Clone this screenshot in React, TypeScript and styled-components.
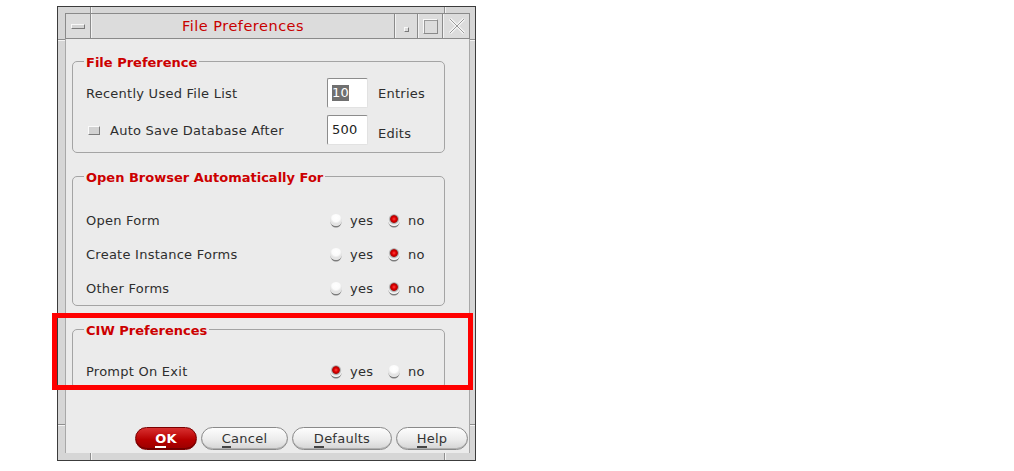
import React from 'react';
import styled, { createGlobalStyle } from 'styled-components';

const GlobalStyle = createGlobalStyle`
  html, body {
    margin: 0;
    padding: 0;
    background: #fff;
  }
  body {
    font-family: "DejaVu Sans", "Liberation Sans", sans-serif;
    font-size: 13px;
    color: #2e2e2e;
  }
`;

const Stage = styled.div`
  position: relative;
  width: 1014px;
  height: 471px;
  padding: 6px 0 0 57px;
  box-sizing: border-box;
`;

const Window = styled.div`
  position: relative;
  width: 419px;
  height: 455px;
  box-sizing: border-box;
  border: 1px solid #3c3c3c;
  background: #d6d6d6;
  padding: 6px 5px 7px 7px;
  display: flex;
  flex-direction: column;
`;

const Notch = styled.span<{ $side: 'top' | 'bottom'; $x: number }>`
  position: absolute;
  ${(p) => (p.$side === 'top' ? 'top: 0; height: 6px;' : 'bottom: 0; height: 7px;')}
  left: ${(p) => p.$x}px;
  width: 1px;
  background: #8e8e8e;
  box-shadow: 1px 0 0 #f4f4f4;
`;

const SideNotch = styled.span<{ $side: 'left' | 'right'; $y: number }>`
  position: absolute;
  ${(p) => (p.$side === 'left' ? 'left: 0; width: 7px;' : 'right: 0; width: 5px;')}
  top: ${(p) => p.$y}px;
  height: 1px;
  background: #8e8e8e;
  box-shadow: 0 1px 0 #f4f4f4;
`;

const TitleBar = styled.div`
  display: flex;
  height: 26px;
  box-sizing: border-box;
  border: 1px solid #8a8a8a;
  background: #dcdcdc;
`;

const TitleButton = styled.div<{ $w: number }>`
  width: ${(p) => p.$w}px;
  display: flex;
  align-items: center;
  justify-content: center;
  box-sizing: border-box;
  border-left: 1px solid #f2f2f2;
  border-right: 1px solid #8a8a8a;
  &:first-child {
    border-left: none;
  }
  &:last-child {
    border-right: none;
  }
`;

const MenuBar = styled.span`
  width: 14px;
  height: 5px;
  box-sizing: border-box;
  border: 1px solid;
  border-color: #f8f8f8 #7a7a7a #7a7a7a #f8f8f8;
  background: #d4d4d4;
`;

const MinBox = styled.span`
  width: 5px;
  height: 5px;
  margin-top: 6px;
  box-sizing: border-box;
  border: 1px solid;
  border-color: #f8f8f8 #7a7a7a #7a7a7a #f8f8f8;
`;

const MaxBox = styled.span`
  width: 15px;
  height: 15px;
  box-sizing: border-box;
  border: 1px solid;
  border-color: #f8f8f8 #8a8a8a #8a8a8a #f8f8f8;
  box-shadow: inset 1px 1px 0 #9a9a9a;
`;

const TitleText = styled.div`
  flex: 1;
  text-align: center;
  line-height: 24px;
  font-size: 14.5px;
  letter-spacing: 0.5px;
  color: #c80000;
  border-left: 1px solid #f2f2f2;
  border-right: 1px solid #8a8a8a;
`;

const Panel = styled.div`
  flex: 1;
  display: flex;
  flex-direction: column;
  background: #ebebeb;
  border-left: 1px solid #a8a8a8;
  border-right: 1px solid #a8a8a8;
  padding: 12px 24px 3px 6px;
  letter-spacing: 0.25px;
`;

const Group = styled.fieldset<{ $first?: boolean }>`
  margin: ${(p) => (p.$first ? '0' : '13px')} 0 0 0;
  padding: 0 12px 0 13px;
  border: 1px solid #a4a4a4;
  border-radius: 5px;
  min-width: 0;
`;

const Legend = styled.legend`
  margin-left: -2px;
  padding: 4px 2px 0;
  line-height: 16px;
  font-weight: bold;
  letter-spacing: 0;
  color: #cc0000;
`;

const Rows = styled.div<{ $top: number; $bottom: number }>`
  padding: ${(p) => p.$top}px 0 ${(p) => p.$bottom}px;
  display: flex;
  flex-direction: column;
`;

const FieldRow = styled.div`
  display: grid;
  grid-template-columns: 231px 41px auto;
  column-gap: 10px;
  align-items: center;
  height: 30px;
  & + & {
    margin-top: 7px;
  }
`;

const ChoiceRow = styled.div`
  display: grid;
  grid-template-columns: 244px auto;
  align-items: center;
  height: 34px;
`;

const Label = styled.span`
  white-space: nowrap;
`;

const CheckLabel = styled.span`
  display: flex;
  align-items: center;
  gap: 10px;
  white-space: nowrap;
  padding-left: 2px;
`;

const CheckBox = styled.span`
  width: 12px;
  height: 9px;
  box-sizing: border-box;
  background: #d2d2d2;
  border: 1px solid;
  border-color: #fafafa #7c7c7c #7c7c7c #fafafa;
`;

const NumberBox = styled.span<{ $selected?: boolean }>`
  height: 30px;
  box-sizing: border-box;
  background: #fff;
  border: 1px solid;
  border-color: #8c8c8c #e2e2e2 #e2e2e2 #8c8c8c;
  border-radius: 2px;
  display: flex;
  align-items: center;
  padding-left: 4px;

  & > span {
    background: ${(p) => (p.$selected ? '#707070' : 'transparent')};
    color: ${(p) => (p.$selected ? '#fff' : '#222')};
    line-height: 16px;
  }
`;

const Unit = styled.span<{ $drop?: number }>`
  padding-top: ${(p) => p.$drop || 0}px;
`;

const RadioGroup = styled.div`
  display: flex;
  align-items: center;
`;

const Radio = styled.span<{ $checked?: boolean }>`
  width: 12px;
  height: 12px;
  border-radius: 50%;
  box-sizing: border-box;
  background: ${(p) =>
    p.$checked
      ? 'radial-gradient(circle at 50% 42%, #ff4040 0, #e00000 2px, #b00000 3.4px, #a8a8a8 4.2px, #e6e6e6 5.5px, #f4f4f4 6px)'
      : 'radial-gradient(circle at 50% 30%, #ffffff 0, #fbfbfb 4px, #e4e4e4 6px)'};
  box-shadow: 0 2px 0 -0.5px #7c7c7c;
  margin-right: 8px;
`;

const RadioText = styled.span<{ $w: number }>`
  width: ${(p) => p.$w}px;
`;

const ButtonRow = styled.div`
  margin-top: auto;
  display: flex;
  justify-content: flex-end;
  gap: 4px;
  margin-right: -23px;
`;

const Button = styled.button<{ $primary?: boolean; $w: number }>`
  width: ${(p) => p.$w}px;
  height: 23px;
  padding: 0;
  border-radius: 12px;
  font-family: "DejaVu Sans", "Liberation Sans", sans-serif;
  font-size: 13px;
  letter-spacing: 0.25px;
  font-weight: ${(p) => (p.$primary ? 'bold' : 'normal')};
  color: ${(p) => (p.$primary ? '#fff' : '#333')};
  border: 1px solid ${(p) => (p.$primary ? '#7a0000' : '#8a8a8a')};
  background: ${(p) =>
    p.$primary
      ? 'linear-gradient(#d83030, #b80000 55%, #9a0000)'
      : 'linear-gradient(#fdfdfd, #ececec 55%, #d4d4d4)'};
  box-shadow: inset 0 -1px 0 ${(p) => (p.$primary ? '#700000' : '#b0b0b0')};

  & u {
    text-decoration: none;
    border-bottom: 2px solid ${(p) => (p.$primary ? '#ffffff' : '#444')};
  }
`;

const Highlight = styled.div`
  position: absolute;
  left: 52px;
  top: 313px;
  width: 421px;
  height: 77px;
  box-sizing: border-box;
  border: 5px solid #ff0000;
  pointer-events: none;
`;

const choiceRows: { label: string; yes: boolean }[] = [
  { label: 'Open Form', yes: false },
  { label: 'Create Instance Forms', yes: false },
  { label: 'Other Forms', yes: false },
];

const YesNo: React.FC<{ yes: boolean }> = ({ yes }) => (
  <RadioGroup>
    <Radio $checked={yes} />
    <RadioText $w={38}>yes</RadioText>
    <Radio $checked={!yes} />
    <RadioText $w={20}>no</RadioText>
  </RadioGroup>
);

const CloseIcon = () => (
  <svg width="20" height="20" viewBox="0 0 20 20">
    <path d="M3 3 L17 17 M17 3 L3 17" stroke="#f6f6f6" strokeWidth="3" fill="none" />
    <path d="M3 3 L17 17 M17 3 L3 17" stroke="#9a9a9a" strokeWidth="1" fill="none" />
  </svg>
);

const App: React.FC = () => {
  return (
    <Stage>
      <GlobalStyle />
      <Window>
        <Notch $side="top" $x={32} />
        <Notch $side="top" $x={386} />
        <Notch $side="bottom" $x={32} />
        <Notch $side="bottom" $x={386} />
        <SideNotch $side="left" $y={32} />
        <SideNotch $side="right" $y={32} />
        <SideNotch $side="left" $y={417} />
        <SideNotch $side="right" $y={417} />

        <TitleBar>
          <TitleButton $w={25}>
            <MenuBar />
          </TitleButton>
          <TitleText>File Preferences</TitleText>
          <TitleButton $w={23}>
            <MinBox />
          </TitleButton>
          <TitleButton $w={25}>
            <MaxBox />
          </TitleButton>
          <TitleButton $w={26}>
            <CloseIcon />
          </TitleButton>
        </TitleBar>

        <Panel>
          <Group $first>
            <Legend>File Preference</Legend>
            <Rows $top={7} $bottom={7}>
              <FieldRow>
                <Label>Recently Used File List</Label>
                <NumberBox $selected>
                  <span>10</span>
                </NumberBox>
                <Unit>Entries</Unit>
              </FieldRow>
              <FieldRow>
                <CheckLabel>
                  <CheckBox />
                  Auto Save Database After
                </CheckLabel>
                <NumberBox>
                  <span>500</span>
                </NumberBox>
                <Unit $drop={6}>Edits</Unit>
              </FieldRow>
            </Rows>
          </Group>

          <Group>
            <Legend>Open Browser Automatically For</Legend>
            <Rows $top={17} $bottom={0}>
              {choiceRows.map((row) => (
                <ChoiceRow key={row.label}>
                  <Label>{row.label}</Label>
                  <YesNo yes={row.yes} />
                </ChoiceRow>
              ))}
            </Rows>
          </Group>

          <Group>
            <Legend>CIW Preferences</Legend>
            <Rows $top={15} $bottom={0}>
              <ChoiceRow>
                <Label>Prompt On Exit</Label>
                <YesNo yes={true} />
              </ChoiceRow>
            </Rows>
          </Group>

          <ButtonRow>
            <Button $primary $w={62}>
              <u>O</u>K
            </Button>
            <Button $w={87}>
              <u>C</u>ancel
            </Button>
            <Button $w={100}>
              <u>D</u>efaults
            </Button>
            <Button $w={72}>
              <u>H</u>elp
            </Button>
          </ButtonRow>
        </Panel>
      </Window>
      <Highlight />
    </Stage>
  );
};

export default App;
